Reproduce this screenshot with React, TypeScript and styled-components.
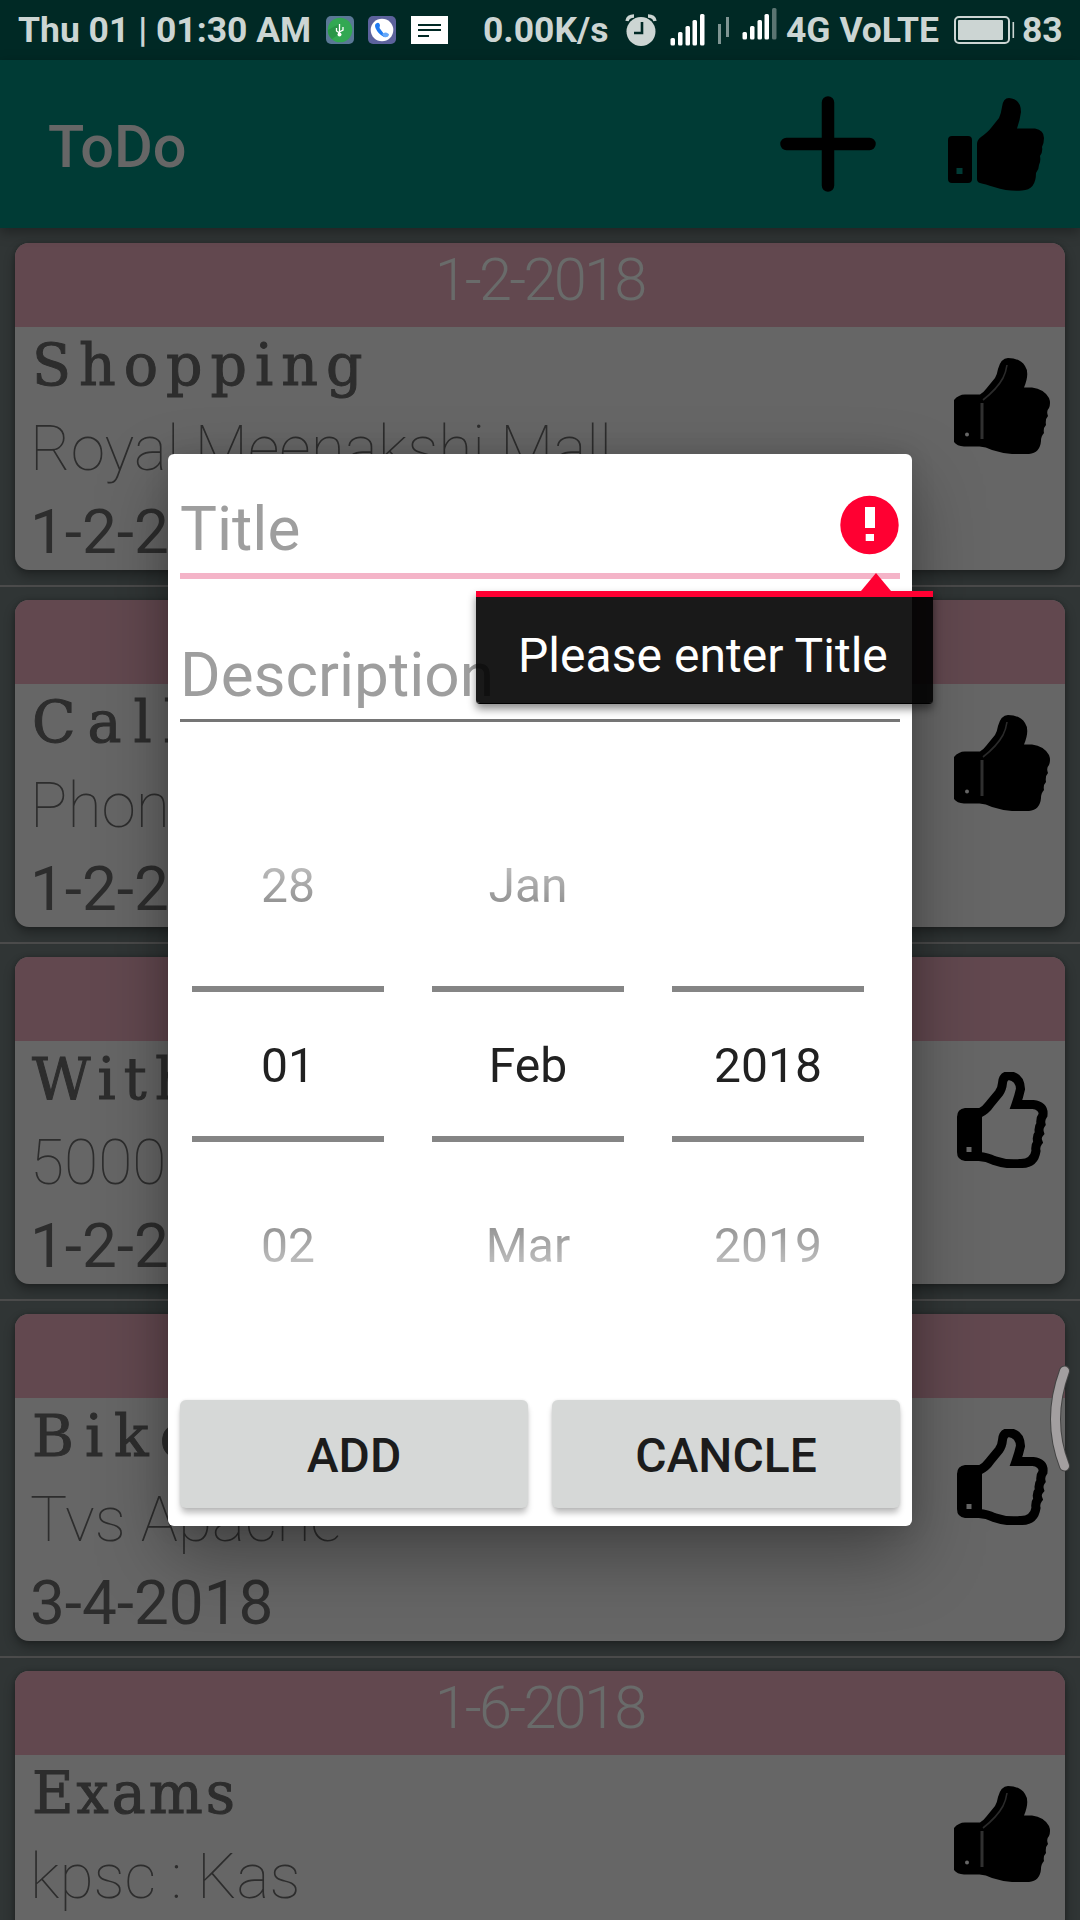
import React from 'react';
import styled, { createGlobalStyle } from 'styled-components';

const GlobalStyle = createGlobalStyle`
  * { box-sizing: border-box; }
  body { margin: 0; background: #303535; font-family: Roboto, "Noto Sans", sans-serif; }
`;

const Screen = styled.div`
  position: relative;
  display: flex;
  flex-direction: column;
  width: 1080px;
  height: 1920px;
  overflow: hidden;
  background: #303535;
`;

const StatusBar = styled.div`
  display: flex;
  align-items: center;
  height: 60px;
  flex: none;
  padding: 0 18px 0 18px;
  background: #002925;
  color: #ccd5d3;
  font-size: 35.5px;
  font-weight: 700;
  line-height: 62px;
  white-space: nowrap;
`;

const StatusText = styled.span<{ $width: number; $gap: number }>`
  width: ${(p) => p.$width}px;
  margin-right: ${(p) => p.$gap}px;
  flex: none;
`;

const StatusIcon = styled.svg<{ $gap: number }>`
  display: block;
  flex: none;
  margin-right: ${(p) => p.$gap}px;
`;

const AppBar = styled.header`
  display: flex;
  align-items: center;
  height: 168px;
  flex: none;
  padding: 0 36px 0 48px;
  background: #003b35;
  box-shadow: 0 4px 12px rgba(0, 0, 0, 0.35);
  z-index: 1;
`;

const AppTitle = styled.h1`
  margin: 5px auto 0 0;
  color: #666;
  font-size: 59.5px;
  font-weight: 500;
  line-height: 72px;
`;

const Actions = styled.div`
  display: flex;
  gap: 72px;
`;

const Icon = styled.svg`
  display: block;
  width: 96px;
  height: 96px;
  flex: none;
`;

const TaskList = styled.main`
  padding-top: 2px;
`;

const TaskRow = styled.div`
  height: 357px;
  padding: 13px 15px 15px;
  border-bottom: 2px solid #4b4b4b;
`;

const Card = styled.article`
  height: 327px;
  overflow: hidden;
  border-radius: 14px;
  background: #666;
  box-shadow: 0 6px 12px rgba(0, 0, 0, 0.32), 0 0 4px rgba(0, 0, 0, 0.2);
`;

const CardDate = styled.div`
  height: 84px;
  padding-right: 1px;
  background: #62484f;
  color: #696b6a;
  text-align: center;
  font-size: 59.5px;
  font-weight: 300;
  letter-spacing: -2.8px;
  line-height: 75px;
`;

const CardBody = styled.div`
  display: flex;
  justify-content: space-between;
  height: 243px;
  padding: 0 15px;
  color: #2d2d2d;
  white-space: nowrap;
`;

const TaskTitle = styled.h2<{ $tracking: number }>`
  margin: 0;
  padding-left: 2px;
  font-family: "DejaVu Serif", serif;
  font-size: 57px;
  font-weight: 400;
  line-height: 77px;
  height: 76px;
  letter-spacing: ${(p) => p.$tracking}px;
  -webkit-text-stroke: 1px #2d2d2d;
`;

const TaskDescription = styled.p`
  margin: 0;
  font-size: 62.3px;
  font-weight: 100;
  height: 93px;
  line-height: 91px;
`;

const TaskDate = styled.p`
  margin: 0;
  font-size: 62px;
  line-height: 71px;
`;

const LikeSlot = styled.div`
  padding-top: 31px;
`;

const Dialog = styled.section`
  position: absolute;
  left: 168px;
  top: 454px;
  z-index: 2;
  width: 744px;
  height: 1072px;
  padding: 0 12px;
  border-radius: 6px;
  background: #fff;
  box-shadow: 0 30px 70px rgba(0, 0, 0, 0.34), 0 0 24px rgba(0, 0, 0, 0.12);
`;

const Field = styled.div<{ $height: number; $line: string; $thickness: number }>`
  display: flex;
  align-items: flex-end;
  justify-content: space-between;
  height: ${(p) => p.$height}px;
  border-bottom: ${(p) => p.$thickness}px solid ${(p) => p.$line};
`;

const Placeholder = styled.span<{ $lift: number }>`
  padding-bottom: ${(p) => p.$lift}px;
  color: #9e9e9e;
  font-size: 62px;
  line-height: 72px;
`;

const ErrorIcon = styled.svg`
  display: block;
  margin-bottom: 18px;
`;

const Picker = styled.div`
  display: flex;
  gap: 48px;
  height: 516px;
  margin-top: 84px;
  padding-left: 12px;
`;

const Column = styled.div`
  position: relative;
  width: 192px;
  height: 516px;
`;

const Wheel = styled.div`
  display: flex;
  flex-direction: column;
  justify-content: center;
  height: 516px;
  text-align: center;
  color: #212121;
  font-size: 48px;
  mask-image: linear-gradient(to bottom, transparent 0, #000 200px, #000 316px, transparent 516px);
`;

const WheelItem = styled.div`
  height: 180px;
  flex: none;
  line-height: 184px;
`;

const Selection = styled.div`
  position: absolute;
  left: 0;
  top: 180px;
  width: 192px;
  height: 156px;
  border: solid #858585;
  border-width: 6px 0;
`;

const ButtonRow = styled.div`
  display: flex;
  gap: 24px;
  margin-top: 78px;
`;

const Button = styled.button`
  width: 348px;
  height: 108px;
  padding: 2px 0 0;
  border: 0;
  border-radius: 6px;
  background: #d6d8d7;
  box-shadow: 0 6px 6px -1px rgba(0, 0, 0, 0.26), 0 0 3px rgba(0, 0, 0, 0.1);
  color: #1c1c1c;
  font-family: Roboto, sans-serif;
  font-size: 48px;
  font-weight: 500;
`;

const ErrorPopup = styled.div`
  position: absolute;
  left: 476px;
  top: 591px;
  z-index: 3;
  width: 457px;
  height: 113px;
  padding-left: 42px;
  border-top: 6px solid #ff0032;
  border-bottom: 1px solid #000;
  border-radius: 0 0 4px 4px;
  background: rgba(0, 0, 0, 0.9);
  background-clip: padding-box;
  box-shadow: 0 5px 8px rgba(0, 0, 0, 0.45);
  color: #fff;
  font-size: 48px;
  line-height: 117px;
  letter-spacing: 0.04px;
  white-space: nowrap;
`;

const PopupArrow = styled.svg`
  position: absolute;
  left: 385px;
  top: -24px;
`;

const EdgeHandle = styled.svg`
  position: absolute;
  left: 1044px;
  top: 1360px;
  z-index: 4;
`;

const PlusIcon = () => (
  <Icon viewBox="0 0 96 96" stroke="#000" strokeWidth="12.5" strokeLinecap="round">
    <path d="M48 6.5V89.5M6.5 48H89.5" />
  </Icon>
);

const ThumbAction = () => (
  <Icon viewBox="0 0 96 96">
    <path
      fillRule="evenodd"
      d="M4 40H20Q24 40 24 44V83Q24 87 20 87H4Q0 87 0 83V44Q0 40 4 40ZM8.5 72V78H14.5V72Z"
    />
    <path d="M29 48Q29 44 33 41Q40 36 43 32L51 22Q53 18 54 11Q55 2 61 2Q73 3 73 16Q72 24 69 32.500H87Q96 34 96 42Q96 47 94 51Q95 56 92 60Q93 65 91 69Q91 73 88 77Q88 94 74 94.500Q62 96 46 91Q37 88 32 87Q29 86 29 83Z" />
  </Icon>
);

const ThumbFilled = () => (
  <Icon viewBox="0 0 96 96">
    <path d="M0 42Q5 36 12 36.500H26Q29 35 32 31L41 20Q43 17 44 11Q47 0 54 0Q66 0 71 8Q76 15 70 29.500H78Q90 31 95 40Q97 45 95 50Q92 53 94 58Q91 61 92 67Q89 70 90 75Q87 78 87 83Q86 95 75 96H58Q47 95 38 92Q31 88 24 88.500H10Q3 88 0 84Z" />
    <path d="M28 45V81" stroke="#303030" strokeWidth="3" fill="none" />
    <path d="M29 42Q43 31 49 20Q52 14 53 7" stroke="#2a2a2a" strokeWidth="1.6" fill="none" />
    <circle cx="13" cy="76.500" r="2" fill="#666" />
  </Icon>
);

const ThumbOutline = () => (
  <Icon viewBox="0 0 96 96">
    <path
      fillRule="evenodd"
      d="M11 36H28V89H11Q3 88 3 80V45Q3 37 11 36ZM12.500 75V80H17.500V75Z"
    />
    <path
      d="M25 41.500Q32 38 36 32L45 21Q48 17 48.500 11Q49 4 55 3.500Q66 5 66.500 17Q65 24 62 32.500H79Q90 34 89 43Q86 47 87 52Q84 56 85.500 61Q82 65 84 70Q81 74 82 79Q80 92 66 91.500Q53 93 40 88.500Q33 85 25 84.500"
      fill="none"
      stroke="#000"
      strokeWidth="9"
    />
  </Icon>
);

const UsbBadge = () => (
  <StatusIcon $gap={14} width="28" height="28" viewBox="0 0 28 28">
    <rect width="28" height="28" rx="5" fill="#5a7896" />
    <circle cx="14" cy="14" r="12.300" fill="#32a852" />
    <path d="M2 14L13 8L16 16L6 23Q2 20 2 14Z" fill="#2a9648" />
    <path d="M13.500 8V19M10.500 12V15L13.500 17M17 11V14L13.500 16" stroke="#fff" strokeWidth="1.300" fill="none" />
    <circle cx="13.500" cy="18.500" r="2" fill="#fff" />
  </StatusIcon>
);

const PhoneBadge = () => (
  <StatusIcon $gap={15} width="28" height="28" viewBox="0 0 28 28">
    <rect width="28" height="28" rx="5" fill="#5c629c" />
    <circle cx="14" cy="14" r="11.300" fill="#fff" />
    <path d="M9 7Q6 8 7.500 12Q10 18 16 21L16 18L11.500 12L12 9Q11 6 9 7Z" fill="#1f7bf2" />
    <path d="M14 18L17 16.500Q21 17 21 19Q20 22 16 21Z" fill="#65a8fa" />
  </StatusIcon>
);

const MessageBadge = () => (
  <StatusIcon $gap={35} width="37" height="28" viewBox="0 0 37 28">
    <rect width="37" height="28" fill="#fff" />
    <path d="M7 9H30M7 14H30M7 20H18" stroke="#002925" strokeWidth="2" />
  </StatusIcon>
);

const AlarmIcon = () => (
  <StatusIcon $gap={13} width="32" height="32" viewBox="0 0 32 32">
    <circle cx="16" cy="17.500" r="14.500" fill="#ccd5d3" />
    <path d="M2 7Q3 2 9 2M30 7Q29 2 23 2" stroke="#ccd5d3" strokeWidth="3.400" fill="none" />
    <path d="M17 8V19H9" stroke="#002925" strokeWidth="2.600" fill="none" />
  </StatusIcon>
);

const barXs = [0.5, 8, 15.5, 22.5, 30];

const SignalIcons = () => (
  <StatusIcon $gap={8} width="108" height="60" viewBox="0 0 108 60">
    {barXs.map((x, i) => (
      <rect key={x} x={x} y={38 - i * 6} width="4.500" height={7.500 + i * 6} rx="1.500" fill="#fff" />
    ))}
    <rect x="48" y="24" width="3" height="20" fill="#7f9492" />
    <rect x="56" y="17" width="3" height="20" fill="#7f9492" />
    {barXs.map((x, i) => (
      <rect
        key={x}
        x={x + 72}
        y={32 - i * 6}
        width="4.500"
        height={7.500 + i * 6}
        rx="1.500"
        fill={i === 4 ? '#5b7572' : '#fff'}
      />
    ))}
  </StatusIcon>
);

const BatteryIcon = () => (
  <StatusIcon $gap={7} width="61" height="28" viewBox="0 0 61 28">
    <rect x="1" y="1" width="54" height="26" rx="4" fill="none" stroke="#ccd5d3" strokeWidth="2" />
    <rect x="4" y="4" width="45" height="20" rx="1" fill="#ccd5d3" />
    <rect x="58.500" y="6" width="1.600" height="16" fill="#ccd5d3" />
  </StatusIcon>
);

interface Task {
  due: string;
  title: string;
  description: string;
  tracking: number;
  done: boolean;
}

const tasks: Task[] = [
  { due: '1-2-2018', title: 'Shopping', description: 'Royal Meenakshi Mall', tracking: 8, done: true },
  { due: '1-2-2018', title: 'Call', description: 'Phone', tracking: 12, done: true },
  { due: '1-2-2018', title: 'With', description: '5000', tracking: 8, done: false },
  { due: '3-4-2018', title: 'Bike', description: 'Tvs Apache', tracking: 11, done: false },
  { due: '1-6-2018', title: 'Exams', description: 'kpsc : Kas', tracking: 3, done: true },
];

const wheels = [
  ['28', '01', '02'],
  ['Jan', 'Feb', 'Mar'],
  ['', '2018', '2019'],
];

export default function App() {
  return (
    <>
      <GlobalStyle />
      <Screen>
        <StatusBar>
          <StatusText $width={291} $gap={17}>Thu 01 | 01:30 AM</StatusText>
          <UsbBadge />
          <PhoneBadge />
          <MessageBadge />
          <StatusText $width={124} $gap={18}>0.00K/s</StatusText>
          <AlarmIcon />
          <SignalIcons />
          <StatusText $width={155} $gap={13}>4G VoLTE</StatusText>
          <BatteryIcon />
          <StatusText $width={42} $gap={0}>83</StatusText>
        </StatusBar>
        <AppBar>
          <AppTitle>ToDo</AppTitle>
          <Actions>
            <PlusIcon />
            <ThumbAction />
          </Actions>
        </AppBar>
        <TaskList>
          {tasks.map((task) => (
            <TaskRow key={task.title}>
              <Card>
                <CardDate>{task.due}</CardDate>
                <CardBody>
                  <div>
                    <TaskTitle $tracking={task.tracking}>{task.title}</TaskTitle>
                    <TaskDescription>{task.description}</TaskDescription>
                    <TaskDate>{task.due}</TaskDate>
                  </div>
                  <LikeSlot>{task.done ? <ThumbFilled /> : <ThumbOutline />}</LikeSlot>
                </CardBody>
              </Card>
            </TaskRow>
          ))}
        </TaskList>
        <Dialog>
          <Field $height={125} $line="#f4b4c8" $thickness={6}>
            <Placeholder $lift={8}>Title</Placeholder>
            <ErrorIcon width="60" height="60" viewBox="0 0 60 60">
              <circle cx="29.500" cy="30" r="29.200" fill="#ff0032" />
              <path d="M25 12H35V33H25ZM25.700 39H34V46H25.700Z" fill="#fff" />
            </ErrorIcon>
          </Field>
          <Field $height={143} $line="#757575" $thickness={3}>
            <Placeholder $lift={8}>Description</Placeholder>
          </Field>
          <Picker>
            {wheels.map((items) => (
              <Column key={items[1]}>
                <Wheel>
                  {items.map((item, i) => (
                    <WheelItem key={i}>{item}</WheelItem>
                  ))}
                </Wheel>
                <Selection />
              </Column>
            ))}
          </Picker>
          <ButtonRow>
            <Button>ADD</Button>
            <Button>CANCLE</Button>
          </ButtonRow>
        </Dialog>
        <ErrorPopup>
          <PopupArrow width="30" height="19" viewBox="0 0 30 19">
            <path d="M15 0L30 18V19H0V18Z" fill="#ff0032" />
          </PopupArrow>
          Please enter Title
        </ErrorPopup>
        <EdgeHandle width="36" height="120" viewBox="0 0 36 120">
          <path d="M20.500 11Q2.500 60 20.500 106" fill="none" stroke="#444" strokeWidth="11" strokeLinecap="round" />
          <path d="M20.500 11Q2.500 60 20.500 106" fill="none" stroke="#a39fa0" strokeWidth="9" strokeLinecap="round" />
        </EdgeHandle>
      </Screen>
    </>
  );
}
